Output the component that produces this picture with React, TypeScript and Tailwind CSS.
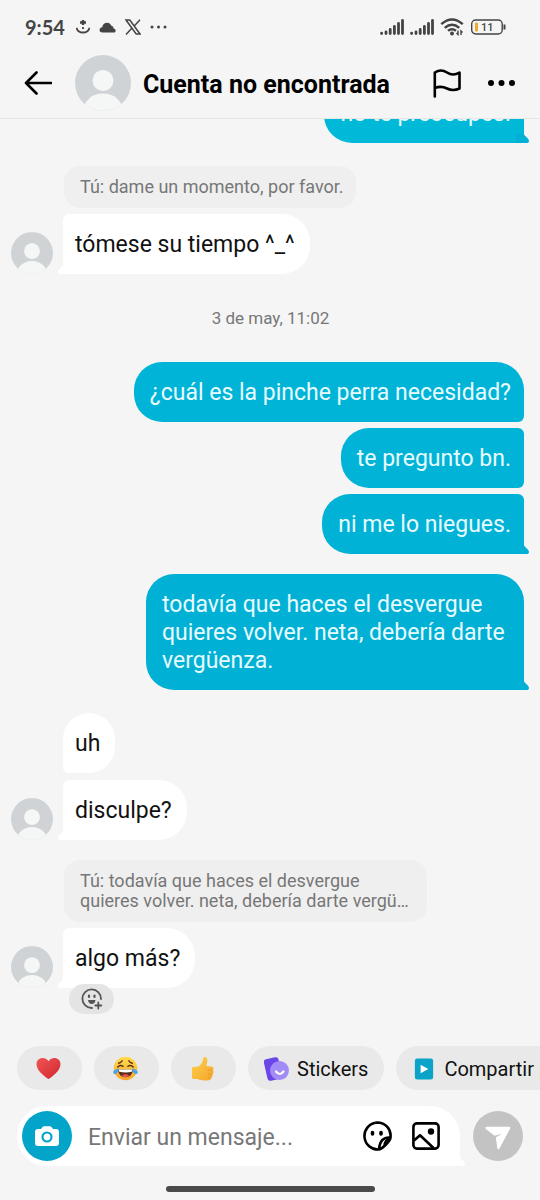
import React from 'react';
import clsx from 'clsx';

const TAIL = 'M0 0 C0 2 5 4 5 7 Q5 9 2 9 H-8 V0 Z';

const Avatar = ({className}: { className: string }) => (
    <svg viewBox="0 0 56 56" className={clsx('shrink-0', className)} role="img" aria-label="Avatar">
        <defs>
            <clipPath id="avatarClip"><circle cx="28" cy="28" r="28"/></clipPath>
        </defs>
        <g clipPath="url(#avatarClip)">
            <rect width="56" height="56" fill="#d0d3d6"/>
            <circle cx="28" cy="25.500" r="10.500" fill="#f5f6f6"/>
            <ellipse cx="28" cy="56" rx="20" ry="17.500" fill="#f5f6f6"/>
        </g>
    </svg>
);

const Quote = ({children}: { children: React.ReactNode }) => (
    <div className="ml-[53px] mb-[6px] max-w-[363px] self-start rounded-2xl bg-[#efefef] py-[11px] pl-4 pr-3">
        <p className="text-lg leading-5 text-[#777777]">{children}</p>
    </div>
);

type BubbleProps = { children: React.ReactNode, className?: string, tail?: boolean };

const Sent = ({children, className, tail}: BubbleProps) => (
    <div className={clsx('relative mr-[6px] self-end rounded-l-[28px] pb-[15px] pl-4 pr-[13px] pt-[17px] text-[23px] leading-7 text-[#e8fbff]', className)}>
        {children}
        {tail && <svg viewBox="0 0 5 9" className="absolute -right-[5px] bottom-0 h-[9px] w-[5px] overflow-visible">
            <path d={TAIL} fill="#00b1d5"/>
        </svg>}
    </div>
);

const Received = ({children, className, tail}: BubbleProps) => (
    <div className={clsx('flex items-end', className)}>
        <div className="w-[52px] shrink-0">{tail && <Avatar className="h-[42px] w-[42px]"/>}</div>
        <div className={clsx('relative rounded-r-[28px] bg-white pb-[15px] pl-3 pr-[15px] pt-[17px] text-[23px] leading-7 text-[#111111]',
            tail ? 'rounded-tl-md' : 'rounded-tl-[28px] rounded-bl-md')}>
            {children}
            {tail && <svg viewBox="0 0 5 9" className="absolute -left-[5px] bottom-0 h-[9px] w-[5px] -scale-x-100 overflow-visible">
                <path d={TAIL} fill="#ffffff"/>
            </svg>}
        </div>
    </div>
);

const Signal = () => (
    <svg viewBox="0 0 24 16" className="h-4 w-6" stroke="#444444" strokeWidth="2.800" strokeLinecap="round">
        <path d="M1.600 14.500v-.4M6 14.500v-1.500M10.200 14.500v-4M14.400 14.500V7.500M18.500 14.500V4.500M22.500 14.500V1.500"/>
    </svg>
);

const StatusBar = () => (
    <div className="flex h-[54px] shrink-0 items-center justify-between pl-[25px] pr-[34px] text-[#444444]">
        <div className="flex items-center">
            <span className="mr-[11px] font-['Lato'] text-xl font-bold">9:54</span>
            <svg viewBox="0 0 14 14" className="mr-[9px] h-[14px] w-[14px]" fill="none" stroke="#444444" strokeWidth="1.800">
                <path d="M.8 8.500Q2 12.500 7 12.500T13.200 8.500" strokeLinecap="round"/>
                <path d="M7 0v5M4 2.500h6" strokeWidth="2.400"/>
                <path d="M7 7v2"/>
            </svg>
            <svg viewBox="0 0 17 11" className="mr-[9px] h-[11px] w-[17px]" fill="#444444">
                <path d="M3.500 10.500C-.5 10.500-.3 5.500 3.300 5.200 3.500-.2 11-1 12.300 3.800 14.500 4 14.500 6 14.500 6.500 17.500 7 17 10.500 15 10.500Z"/>
            </svg>
            <svg viewBox="0 0 16 16" className="mr-[9px] h-4 w-4" fill="none" stroke="#444444" strokeWidth="1.500">
                <path d="M1 1H4.800L15 15H11.200ZM15 .8 9 7.300M7 9 1 15.500"/>
            </svg>
            <svg viewBox="0 0 17 4" className="h-1 w-[17px]" fill="#444444">
                <circle cx="2" cy="2" r="1.500"/><circle cx="8.500" cy="2" r="1.500"/><circle cx="15" cy="2" r="1.500"/>
            </svg>
        </div>
        <div className="flex items-center gap-[6px]">
            <Signal/>
            <Signal/>
            <svg viewBox="0 0 24 18" className="h-[18px] w-6" fill="none" stroke="#444444" strokeWidth="2.400">
                <path d="M1.200 6.200Q12-3.400 22.800 6.200M4.700 9.800Q12 3.600 19.300 9.800M8 12.800Q12 9.600 16 12.800"/>
                <circle cx="12" cy="15.500" r="2" fill="#444444" stroke="none"/>
                <path d="M18 12.500v4l-1.500-1.500M21 17v-4l1.500 1.500" strokeWidth="1.400"/>
            </svg>
            <svg viewBox="0 0 36 16" className="h-4 w-9 font-['Roboto'] text-[11px] font-medium">
                <rect x="1.700" y="1" width="30.500" height="14" rx="4" fill="none" stroke="#444444" strokeWidth="1.400"/>
                <rect x="5" y="3.500" width="3" height="9" rx="1" fill="#f0a830"/>
                <path d="M34.500 5.500v5" stroke="#444444" strokeWidth="2"/>
                <text x="11" y="12" fill="#444444">11</text>
            </svg>
        </div>
    </div>
);

const Header = () => (
    <header className="flex h-[65px] shrink-0 items-center border-b border-[#e6e6e6] pb-[6px] pl-6 pr-6">
        <button aria-label="Atrás" className="mr-[23px]">
            <svg viewBox="0 0 28 24" className="h-6 w-7" fill="none" stroke="#000" strokeWidth="2.600" strokeLinecap="round" strokeLinejoin="round">
                <path d="M12.500 1.500 2 12l10.500 10.500M2 12h25"/>
            </svg>
        </button>
        <Avatar className="h-14 w-14"/>
        <h1 className="ml-3 flex-1 whitespace-nowrap pt-[3px] text-[25px] font-bold leading-8 text-black">Cuenta no encontrada</h1>
        <button aria-label="Reportar" className="mr-[27px]">
            <svg viewBox="0 0 28 29" className="h-[29px] w-7" fill="none" stroke="#000" strokeWidth="2.600" strokeLinecap="round" strokeLinejoin="round">
                <path d="M1.800 27.500V3.500Q8-.5 14 3.500T26.500 3.500V19.500Q20 22.500 14 19.500T1.800 19"/>
            </svg>
        </button>
        <button aria-label="Más opciones">
            <svg viewBox="0 0 28 8" className="h-2 w-7">
                <circle cx="3" cy="4" r="3"/><circle cx="13.500" cy="4" r="3"/><circle cx="24" cy="4" r="3"/>
            </svg>
        </button>
    </header>
);

const Heart = () => (
    <svg viewBox="0 0 26 24" className="h-[23px] w-[25px]">
        <defs>
            <linearGradient id="heart" x1="0" y1="0" x2="1" y2="1"><stop stopColor="#f25555"/><stop offset="1" stopColor="#cf2730"/></linearGradient>
        </defs>
        <path fill="url(#heart)" d="M13 23C10 21 .5 14.500.5 7.500.5.5 9.500-1 13 4.500 16.500-1 25.500.5 25.500 7.500 25.500 14.500 16 21 13 23Z"/>
    </svg>
);

const Laugh = () => (
    <svg viewBox="0 0 26 26" className="h-[25px] w-[25px]">
        <defs>
            <linearGradient id="face" x1="0" y1="0" x2="0" y2="1"><stop stopColor="#ffdc4e"/><stop offset="1" stopColor="#f5a52a"/></linearGradient>
        </defs>
        <circle cx="13" cy="13" r="12.300" fill="url(#face)"/>
        <path d="M5.500 14h15c0 5-3 8-7.500 8s-7.500-3-7.500-8Z" fill="#5b2c1a"/>
        <path d="M6 14h14l-.5 2.500q-6.500 1.500-13 0Z" fill="#fff"/>
        <path d="M9 20.500q4-3 8 0-4 3-8 0Z" fill="#ef5350"/>
        <path d="M5 11.500q2.500-3 5.500-.8M15.500 10.700q3-2.200 5.500.8M6 7.500Q8 7 9.500 5M16.500 5Q18 7 20 7.500" fill="none" stroke="#5b2c1a" strokeWidth="1.500" strokeLinecap="round"/>
        <path d="M6 13c-3 .5-6 2-5.700 4.300.4 2.500 5 2.500 5.700-4.300ZM20 13c3 .5 6 2 5.700 4.300-.4 2.500-5 2.500-5.700-4.300Z" fill="#45a5ee"/>
    </svg>
);

const Thumb = () => (
    <svg viewBox="0 0 24 26" className="h-[25px] w-[23px]">
        <defs>
            <linearGradient id="thumb" x1="0" y1="0" x2="1" y2="1"><stop stopColor="#ffd04a"/><stop offset="1" stopColor="#f5a62c"/></linearGradient>
        </defs>
        <path fill="url(#thumb)" d="M1 12.500Q1 11.500 2.500 11.500L8 11C10.500 9 12 6.500 12.800 2.500 13.300.2 17 .5 17 4.500 17 7 16.300 9 16 10.500L21.500 11C23.500 11.200 24 13.500 22.700 14.700 24 16 23.700 18 22.400 18.700 23 20.300 22.500 21.800 21.200 22.300 21.200 24.500 20 25 18.500 25.200 14 25.700 10 25.500 7 24L2.500 24Q1 24 1 22.500Z"/>
        <path d="M17 14.700h5.500M17.500 18.700h4.700M17.500 22.300h3.500" stroke="#e8952a" strokeWidth=".8"/>
    </svg>
);

const Chip = ({children, label}: { children: React.ReactNode, label?: string }) => (
    <button aria-label={label} className={clsx('flex h-11 shrink-0 items-center justify-center rounded-full bg-[#e9e9e9] text-xl text-[#111111]', label ? 'w-[65px] pr-[2px]' : 'gap-2 px-4 pt-[2px]')}>
        {children}
    </button>
);

const QuickReplies = () => (
    <div className="flex shrink-0 gap-3 overflow-hidden whitespace-nowrap pl-[17px]">
        <Chip label="Corazón"><Heart/></Chip>
        <Chip label="Risa"><Laugh/></Chip>
        <Chip label="Me gusta"><Thumb/></Chip>
        <Chip>
            <svg viewBox="0 0 25 26" className="h-[26px] w-[25px]">
                <rect x="1.500" y="2" width="15" height="22" rx="3" fill="#6a45e8" transform="rotate(-13 9 13)"/>
                <circle cx="15.500" cy="14.500" r="9.500" fill="#a38bf7"/>
                <path d="M12 15.500q4 5 7.500 0" fill="none" stroke="#fff" strokeWidth="2.200" strokeLinecap="round"/>
            </svg>
            Stickers
        </Chip>
        <Chip>
            <svg viewBox="0 0 25 24" className="h-6 w-6">
                <rect x="3" y="1" width="19" height="22" rx="2.500" fill="#0ba3c7"/>
                <path d="M9 7.500v9l8-4.500Z" fill="#fff"/>
            </svg>
            Compartir publicación
        </Chip>
    </div>
);

const Composer = () => (
    <form className="flex shrink-0 items-center px-[17px] pt-4">
        <div className="relative flex h-[60px] min-w-0 flex-1 items-center rounded-l-[30px] rounded-tr-[30px] bg-white pl-[5px] pr-5">
            <button type="button" aria-label="Cámara" className="flex h-[50px] w-[50px] shrink-0 items-center justify-center rounded-full bg-[#02a4ca]">
                <svg viewBox="0 0 24 20" className="h-5 w-6">
                    <path fill="#fff" d="M3 3h3l1.500-2Q8.200.2 9 .2h6q.8 0 1.500.8L18 3h3q3 0 3 3v11q0 3-3 3H3q-3 0-3-3V6Q0 3 3 3Z"/>
                    <circle cx="12" cy="11" r="4.500" fill="none" stroke="#02a4ca" strokeWidth="2.200"/>
                </svg>
            </button>
            <input aria-label="Enviar un mensaje" placeholder="Enviar un mensaje..." className="ml-4 min-w-0 flex-1 bg-transparent pt-1 text-[23px] text-black outline-none placeholder:text-[#777777]"/>
            <button type="button" aria-label="Stickers" className="mr-[20px]">
                <svg viewBox="0 0 30 30" className="h-[30px] w-[30px]" fill="none" stroke="#000" strokeWidth="2.600" strokeLinejoin="round">
                    <path d="M28.500 16.500C29.500 8 23.500 1.500 15 1.500A13.500 13.500 0 0 0 17 28.500Q19.500 28 24 23.500T28.500 16.500Q18 15.500 17 28.500"/>
                    <path d="M27.500 18Q23 19.500 22.500 24"/>
                    <path d="M10.500 11.500v1.500M19 11.500v1.500" strokeWidth="3.600" strokeLinecap="round"/>
                </svg>
            </button>
            <button type="button" aria-label="Galería">
                <svg viewBox="0 0 28 28" className="h-7 w-7" fill="none" stroke="#000" strokeWidth="2.600" strokeLinejoin="round">
                    <rect x="1.400" y="1.400" width="25.200" height="25.200" rx="3.500"/>
                    <path d="M2 18.500 8 13.300 21.500 26"/>
                    <circle cx="19" cy="9.500" r="3.200" fill="#000" stroke="none"/>
                </svg>
            </button>
            <svg viewBox="0 0 5 9" className="absolute -right-[5px] bottom-0 h-[9px] w-[5px] overflow-visible">
                <path d={TAIL} fill="#ffffff"/>
            </svg>
        </div>
        <button aria-label="Enviar" className="ml-[13px] flex h-[50px] w-[50px] shrink-0 items-center justify-center rounded-full bg-[#c3c3c3]">
            <svg viewBox="0 0 26 24" className="mt-1 h-6 w-[26px]">
                <path fill="#fff" d="M2 .8H24Q26 .8 25 2.700L14.500 22.500Q13 24.500 12.300 22L10.800 11.500 17 7.800 9.500 9.800.8 3Q-.3 1 2 .8Z"/>
            </svg>
        </button>
    </form>
);

const App = () => {
    return (
        <div className="flex h-screen flex-col overflow-hidden bg-[#f5f5f5] font-['Roboto','Liberation_Sans',sans-serif]">
            <StatusBar/>
            <Header/>
            <main className="flex min-h-0 flex-1 flex-col justify-end overflow-hidden pb-8 pl-[11px] pr-[10px]">
                <Sent tail className="mb-[23px] rounded-tr-md bg-[#00b9d8]">no te preocupes.</Sent>
                <Quote>Tú: dame un momento, por favor.</Quote>
                <Received tail>tómese su tiempo ^_^</Received>
                <time className="my-[34px] text-center text-[17px] leading-5 text-[#777777]">3 de may, 11:02</time>
                <Sent className="rounded-tr-[28px] rounded-br-md bg-[#00b4d7]">¿cuál es la pinche perra necesidad?</Sent>
                <Sent className="mt-[6px] rounded-r-md bg-[#00b3d7]">te pregunto bn.</Sent>
                <Sent tail className="mt-[6px] rounded-tr-md bg-[#00b2d6]">ni me lo niegues.</Sent>
                <Sent tail className="mt-5 max-w-[378px] rounded-tr-[28px] bg-[#00b0d5]">todavía que haces el desvergue quieres volver. neta, debería darte vergüenza.</Sent>
                <Received className="mt-[23px]">uh</Received>
                <Received tail className="mb-5 mt-[7px]">disculpe?</Received>
                <Quote>Tú: todavía que haces el desvergue quieres volver. neta, debería darte vergü…</Quote>
                <Received tail>algo más?</Received>
                <button aria-label="Reaccionar" className="relative -mt-1 ml-[58px] flex h-[30px] w-[45px] shrink-0 items-center justify-center self-start rounded-full bg-[#e4e4e4]">
                    <svg viewBox="0 0 22 22" className="h-[22px] w-[22px]" fill="none" stroke="#555555" strokeWidth="1.800" strokeLinecap="round">
                        <path d="M20 11A9.300 9.300 0 1 0 11 20M17.300 14.500v6M14.300 17.500h6"/>
                        <path d="M8 7.500v1.500M13.500 7.500v1.500" strokeWidth="2.200"/>
                        <path d="M7 12h7.500q-.5 4-3.700 4T7 12Z" fill="#555555" stroke="none"/>
                    </svg>
                </button>
            </main>
            <QuickReplies/>
            <Composer/>
            <div className="mx-auto mb-2 mt-5 h-[6px] w-[209px] shrink-0 rounded-full bg-[#4a4a4a]"/>
        </div>
    );
};

export default App;
